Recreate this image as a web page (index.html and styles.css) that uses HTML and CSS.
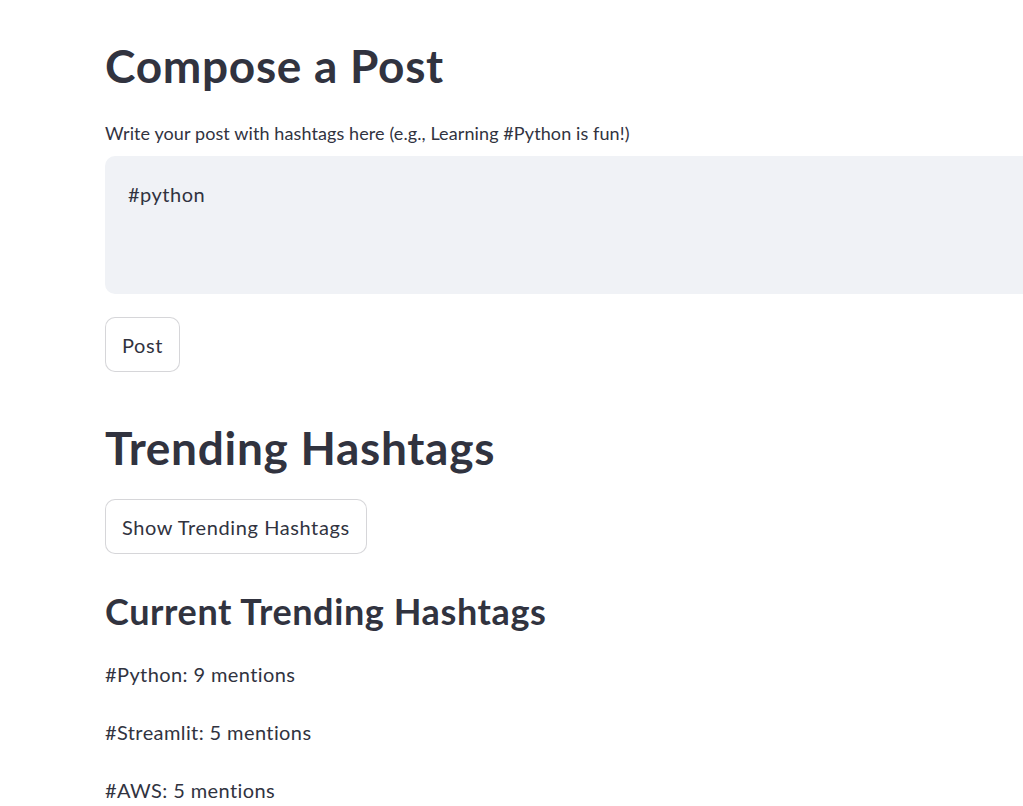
FILE: index.html
```html
<!DOCTYPE html>
<html lang="en">
<head>
<meta charset="utf-8">
<title>Compose a Post</title>
<link rel="stylesheet" href="styles.css">
</head>
<body>
<main class="main">
  <h1 class="title">Compose a Post</h1>
  <label class="label" for="post">Write your post with hashtags here (e.g., Learning #Python is fun!)</label>
  <div class="textarea" id="post">#python</div>
  <button class="btn btn-post">Post</button>
  <h1 class="title title-2">Trending Hashtags</h1>
  <button class="btn btn-show">Show Trending Hashtags</button>
  <h3 class="subtitle">Current Trending Hashtags</h3>
  <p class="item">#Python: 9 mentions</p>
  <p class="item">#Streamlit: 5 mentions</p>
  <p class="item">#AWS: 5 mentions</p>
</main>
</body>
</html>
```

FILE: styles.css
```css
html, body {
  margin: 0;
  padding: 0;
  background: #ffffff;
  overflow: hidden;
}
body {
  font-family: Lato, "Noto Sans", sans-serif;
  color: #31333f;
  width: 1023px;
  height: 806px;
}
.main {
  display: flex;
  flex-direction: column;
  align-items: flex-start;
  padding: 39px 0 0 105px;
  width: 1100px;
}
.title {
  margin: 0;
  font-size: 46px;
  font-weight: 700;
  letter-spacing: 0.7px;
  line-height: 54px;
  color: #31333f;
}
.label {
  margin-top: 26px;
  font-size: 18px;
  letter-spacing: 0.1px;
  line-height: 28px;
}
.textarea {
  box-sizing: border-box;
  margin-top: 9px;
  width: 1000px;
  height: 138px;
  background: #f0f2f6;
  border-radius: 10px;
  padding: 22px 23px;
  font-size: 20px;
  letter-spacing: 0.5px;
  line-height: 32px;
}
.btn {
  box-sizing: border-box;
  height: 55px;
  padding: 0 16px;
  border: 1px solid rgba(49, 51, 63, 0.2);
  border-radius: 10px;
  background: #ffffff;
  color: #31333f;
  font-family: inherit;
  font-size: 20px;
  letter-spacing: 0.6px;
}
.btn-post {
  margin-top: 23px;
}
.title-2 {
  margin-top: 49px;
}
.btn-show {
  margin-top: 24px;
}
.subtitle {
  margin: 36px 0 0;
  font-size: 36px;
  font-weight: 700;
  letter-spacing: 0.6px;
  line-height: 42px;
}
.item {
  margin: 0;
  font-size: 20px;
  letter-spacing: 0.4px;
  line-height: 32px;
}
.subtitle + .item {
  margin-top: 26px;
}
.item + .item {
  margin-top: 26px;
}
```
